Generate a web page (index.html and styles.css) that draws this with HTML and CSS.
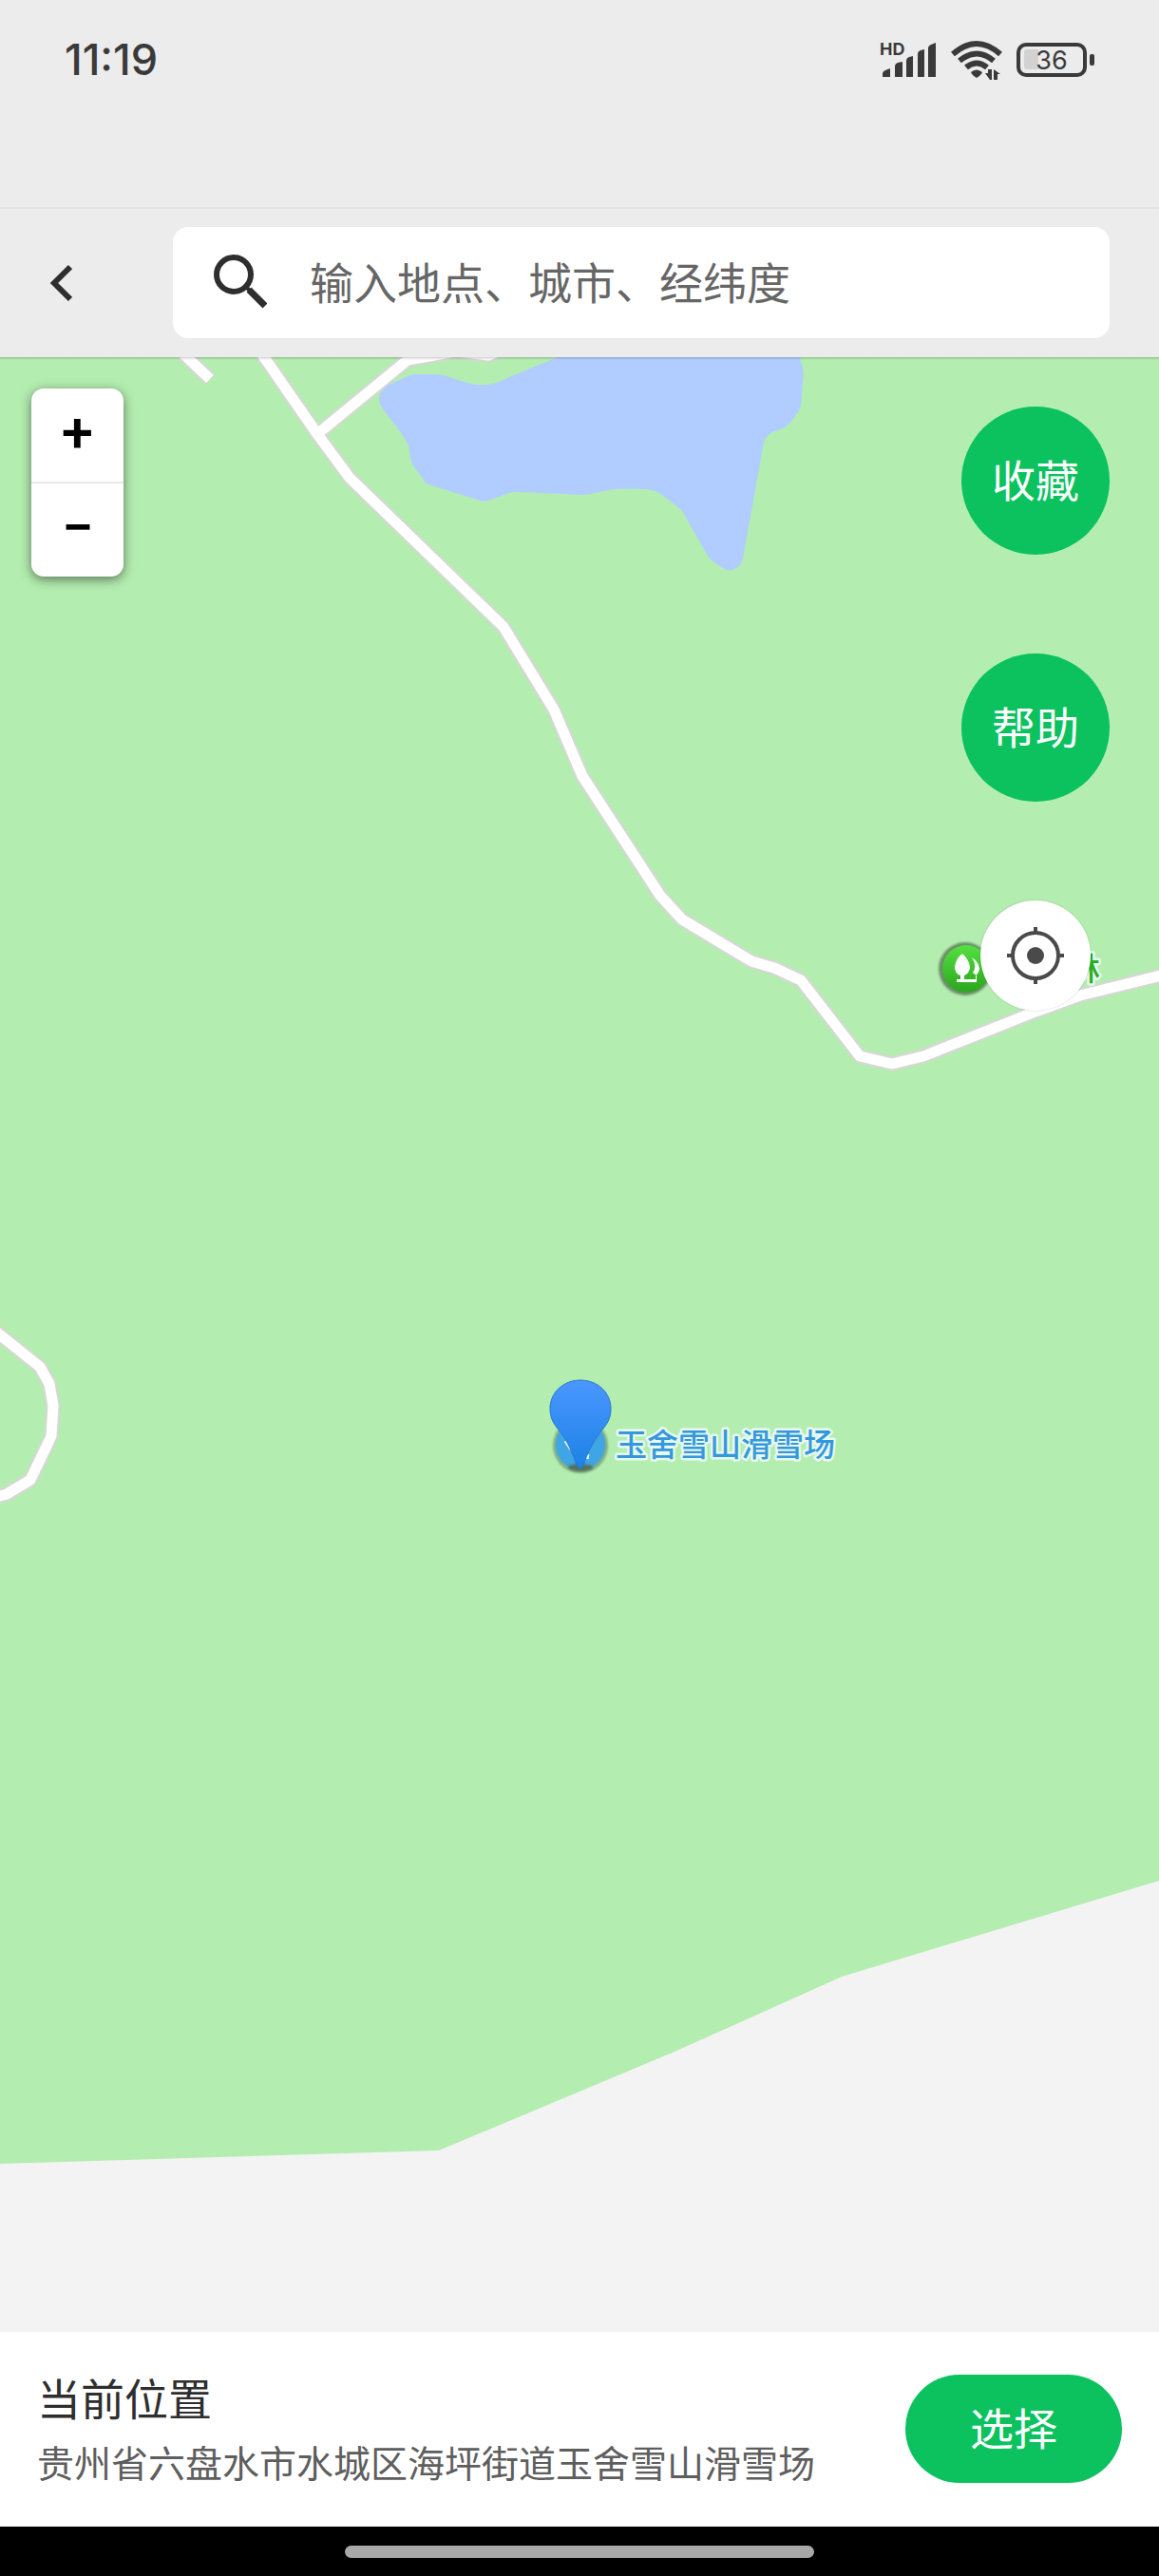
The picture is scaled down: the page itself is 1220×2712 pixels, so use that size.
FILE: index.html
```html
<!DOCTYPE html>
<html lang="zh-CN">
<head>
  <meta charset="UTF-8">
  <meta name="viewport" content="width=device-width, initial-scale=1.0">
  <title>选择位置</title>
  <link rel="stylesheet" href="styles.css">
</head>
<body>
  <div class="status-bar">
    <span class="clock">11:19</span>
    <div class="status-icons">
      <svg class="signal" width="60" height="52" viewBox="0 -6 60 52">
        <text x="0" y="15" class="hd">HD</text>
        <path d="M3 36V33Q3 30 6 29L11 27V36ZM16 36V25Q16 22 19 21L24 20V36ZM28 36V19Q28 16 31 15L35 14V36ZM40 36V12Q40 9 43 8L47 7V36ZM51 36V6Q51 3 54 2L59 0V36Z" transform="translate(0 2)"/>
      </svg>
      <svg class="wifi" width="54" height="42" viewBox="0 0 54 42">
        <g fill="none" stroke="#3a3a3a" stroke-width="6">
          <path d="M2 15Q27 -7 52 15"/>
          <path d="M9 22Q27 7 45 22"/>
          <path d="M16 29Q27 20 38 29"/>
        </g>
        <path d="M21 34Q27 29 33 34Q32 37 27 40Q22 37 21 34Z"/>
        <path d="M36 35H39V31H43V42H41ZM45 31L52 36H49V42H45Z"/>
      </svg>
      <svg class="battery" width="82" height="36" viewBox="0 0 82 36">
        <path d="M11 7H23V28H11Q8 28 8 25V10Q8 7 11 7Z" fill="#d2d2d2"/>
        <rect x="2" y="2" width="70" height="32" rx="8" fill="none" stroke="#3a3a3a" stroke-width="4"/>
        <rect x="77" y="12" width="5" height="12" rx="2"/>
        <text x="37" y="28" class="level">36</text>
      </svg>
    </div>
  </div>

  <header class="header">
    <button class="back" type="button" aria-label="返回">
      <svg width="24" height="40" viewBox="0 0 24 40">
        <path d="M22 3L5 20L22 37" fill="none" stroke="#2e2e2e" stroke-width="6"/>
      </svg>
    </button>
    <label class="search">
      <svg width="56" height="60" viewBox="0 0 56 60" fill="none" stroke="#2e2e2e">
        <circle cx="21" cy="21" r="18" stroke-width="6"/>
        <path d="M35 35L38 38" stroke-width="4"/>
        <path d="M37 37L54 54" stroke-width="7"/>
      </svg>
      <input type="text" placeholder="输入地点、城市、经纬度" aria-label="搜索地点">
    </label>
  </header>

  <main class="map">
    <svg class="map-canvas" viewBox="0 376 1220 2079" preserveAspectRatio="xMidYMid slice">
      <defs>
        <linearGradient id="pinFill" x1="0" y1="0" x2="0" y2="1">
          <stop offset="0" stop-color="#4a97ff"/>
          <stop offset="1" stop-color="#1c82e6"/>
        </linearGradient>
        <linearGradient id="parkFill" x1="0" y1="0" x2="0" y2="1">
          <stop offset="0" stop-color="#54e040"/>
          <stop offset="1" stop-color="#2ba51f"/>
        </linearGradient>
        <filter id="soft" x="-20%" y="-20%" width="140%" height="140%">
          <feGaussianBlur stdDeviation="1"/>
        </filter>
        <g id="roads">
          <path d="M186 366L221 399" stroke-linecap="butt"/>
          <path d="M271 366L334 457L368 503L530 660L583 747L613 817L695 943L718 968L791 1012L815 1019L843 1032L905 1112L939 1120L972 1112L1090 1065L1137 1048L1230 1025"/>
          <path d="M334 457L429 379L480 370L514 374L530 368"/>
          <path d="M-8 1399L42 1439L52 1457L56 1480L54 1512L32 1558L7 1573L-8 1577"/>
        </g>
      </defs>

      <rect x="0" y="376" width="1220" height="2079" fill="#b4edb0"/>
      <path d="M0 2278L462 2264L710 2160L886 2081L1220 1980V2455H0Z" fill="#f3f3f4"/>
      <path d="M587 376L536 397Q520 405 512 405Q502 406 492 403L470 396Q464 394 456 394H438Q432 394 425 398L407 406Q398 414 399 420Q399 426 404 432L423 457Q431 468 431 475Q432 487 437 493L447 507Q449 510 454 511L505 527Q511 529 517 526L536 519Q540 518 545 518L613 521Q620 521 626 519L647 515Q657 514 680 515Q690 516 697 521L716 536Q719 539 722 545L742 580Q747 590 753 593L764 600Q768 602 775 598Q780 596 782 588L803 471Q804 460 813 455L824 451Q830 448 834 442L840 434Q844 428 844 415L846 392L842 376Z" fill="#b1cdff"/>
      <use href="#roads" class="road-edge"/>
      <use href="#roads" class="road"/>

      <!-- forest park -->
      <circle cx="1016" cy="1020" r="28" fill="#6b8f68" filter="url(#soft)"/>
      <circle cx="1017" cy="1020" r="25" fill="url(#parkFill)"/>
      <g fill="#fff">
        <path d="M1013 1004C1018 1008 1021 1014 1021 1019Q1020 1025 1015 1027V1031H1028V1027Q1025 1025 1024 1024Q1029 1017 1023 1008Q1030 1012 1031 1020Q1030 1025 1027 1027V1031H1028V1034H1007V1031H1011V1027Q1005 1025 1005 1018Q1006 1009 1013 1004Z"/>
      </g>
      <text x="1125" y="1032" class="poi poi-park">林</text>

      <!-- ski resort -->
      <circle cx="611" cy="1522" r="29" fill="#7eae85" filter="url(#soft)"/>
      <circle cx="611" cy="1521" r="26" fill="#3fa5e4"/>
      <path d="M595 1517L601 1526M618 1536L619 1531" stroke="#e8f8ff" stroke-width="3"/>
      <ellipse cx="611" cy="1545" rx="13" ry="4" fill="#52725c" filter="url(#soft)"/>
      <path d="M611 1453C593 1453 579 1466 579 1483C579 1492 582 1498 587 1504C597 1516 603 1530 607 1543Q611 1548 614 1543C618 1530 625 1516 635 1504C640 1498 643 1492 643 1483C643 1466 629 1453 611 1453Z" fill="url(#pinFill)" stroke="#2b78cf" stroke-width="1"/>
      <text x="648" y="1533" class="poi poi-ski">玉舍雪山滑雪场</text>
    </svg>

    <div class="zoom">
      <button type="button" aria-label="放大">+</button>
      <button type="button" aria-label="缩小">−</button>
    </div>

    <div class="actions">
      <button class="round" type="button">收藏</button>
      <button class="round" type="button">帮助</button>
      <button class="locate" type="button" aria-label="定位">
        <svg width="60" height="60" viewBox="0 0 60 60" fill="none" stroke="#4a4a4a" stroke-width="4">
          <circle cx="30" cy="30" r="24"/>
          <circle cx="30" cy="30" r="9" fill="#4a4a4a" stroke="none"/>
          <path d="M30 0V7M30 53V60M0 30H7M53 30H60"/>
        </svg>
      </button>
    </div>
  </main>

  <section class="place">
    <div class="place-info">
      <h1>当前位置</h1>
      <p>贵州省六盘水市水城区海坪街道玉舍雪山滑雪场</p>
    </div>
    <button class="choose" type="button">选择</button>
  </section>

  <div class="nav-bar">
    <span class="nav-handle"></span>
  </div>
</body>
</html>
```

FILE: styles.css
```css
* {
  box-sizing: border-box;
}
body {
  margin: 0;
  min-height: 100vh;
  display: flex;
  flex-direction: column;
  font-family: "Noto Sans CJK SC", sans-serif;
  background-color: #ececec;
  color: #2e2e2e;
}
button, input {
  font-family: inherit;
  border: none;
  padding: 0;
}
button {
  cursor: pointer;
}
svg {
  display: block;
}

/* Status bar */
.status-bar {
  display: flex;
  justify-content: space-between;
  align-items: center;
  padding: 36px 68px 128px;
}
.clock {
  font-family: Inter, sans-serif;
  font-size: 45px;
  font-weight: 500;
  line-height: 54px;
  color: #3a3a3a;
}
.status-icons {
  display: flex;
  align-items: center;
  gap: 15px;
  fill: #3a3a3a;
}
.hd {
  font: 700 18px Inter, sans-serif;
}
.level {
  font: 400 27px Inter, sans-serif;
  text-anchor: middle;
}

/* Header */
.header {
  display: flex;
  align-items: center;
  padding: 19px 52px 20px 0;
  border-top: 2px solid #e2e2e2;
}
.back {
  flex: 0 0 182px;
  height: 117px;
  padding-left: 52px;
  background: none;
}
.search {
  flex: 1;
  display: flex;
  align-items: center;
  gap: 45px;
  height: 117px;
  padding: 0 43px;
  background-color: white;
  border-radius: 16px;
}
.search input {
  flex: 1;
  min-width: 0;
  height: 76px;
  padding-bottom: 6px;
  font-size: 46px;
  background: none;
  outline: none;
}
.search input::placeholder {
  color: #666;
  opacity: 1;
}

/* Map */
.map {
  position: relative;
  flex: 1;
  min-height: 900px;
  overflow: hidden;
  background-color: #b4edb0;
}
.map-canvas {
  position: absolute;
  width: 100%;
  height: 100%;
}
.map::after {
  content: "";
  position: absolute;
  top: 0;
  left: 0;
  right: 0;
  height: 3px;
  background: linear-gradient(rgba(0, 0, 0, 0.18), rgba(0, 0, 0, 0));
}
.road, .road-edge {
  fill: none;
  stroke-linejoin: round;
}
.road {
  stroke: white;
  stroke-width: 11px;
}
.road-edge {
  stroke: #d8d6d6;
  stroke-width: 15px;
}
.poi {
  font-size: 33px;
  font-weight: 500;
  paint-order: stroke;
  stroke: #e6f8f0;
  stroke-width: 5px;
  stroke-linejoin: round;
}
.poi-park {
  fill: #2aae1c;
}
.poi-ski {
  fill: #3598dc;
}
.zoom {
  position: absolute;
  top: 33px;
  left: 33px;
  width: 97px;
  border-radius: 13px;
  background-color: white;
  box-shadow: 0 3px 12px rgba(0, 0, 0, 0.5);
}
.zoom button {
  display: block;
  width: 100%;
  height: 98px;
  padding-bottom: 4px;
  background: none;
  font-family: Roboto, sans-serif;
  font-size: 60px;
  font-weight: 500;
  line-height: 94px;
  color: black;
}
.zoom button:first-child {
  height: 100px;
  border-bottom: 2px solid #e8e8e8;
}
.actions {
  position: absolute;
  top: 52px;
  right: 52px;
  display: flex;
  flex-direction: column;
  align-items: center;
  gap: 104px;
}
.round, .choose {
  padding-bottom: 6px;
  background-color: #0bc25f;
  color: white;
  font-size: 46px;
}
.round {
  width: 156px;
  height: 156px;
  border-radius: 50%;
}
.locate {
  display: flex;
  align-items: center;
  justify-content: center;
  width: 116px;
  height: 116px;
  border-radius: 50%;
  background-color: white;
  box-shadow: 0 0 2px rgba(0, 0, 0, 0.2);
}

/* Current place */
.place {
  display: flex;
  justify-content: space-between;
  align-items: flex-start;
  gap: 24px;
  padding: 45px 39px 38px;
  background-color: white;
}
.place-info {
  display: flex;
  flex-direction: column;
  gap: 22px;
}
.place h1, .place p {
  margin: 0;
  line-height: 46px;
}
.place h1 {
  font-size: 46px;
  font-weight: 400;
}
.place p {
  padding-bottom: 8px;
  font-size: 39px;
  color: #5e5e5e;
}
.choose {
  flex: none;
  width: 228px;
  height: 114px;
  border-radius: 57px;
}
.nav-bar {
  display: flex;
  justify-content: center;
  padding: 20px 0 19px;
  background-color: black;
}
.nav-handle {
  width: 494px;
  height: 13px;
  border-radius: 7px;
  background-color: #a8a8a8;
}
```
